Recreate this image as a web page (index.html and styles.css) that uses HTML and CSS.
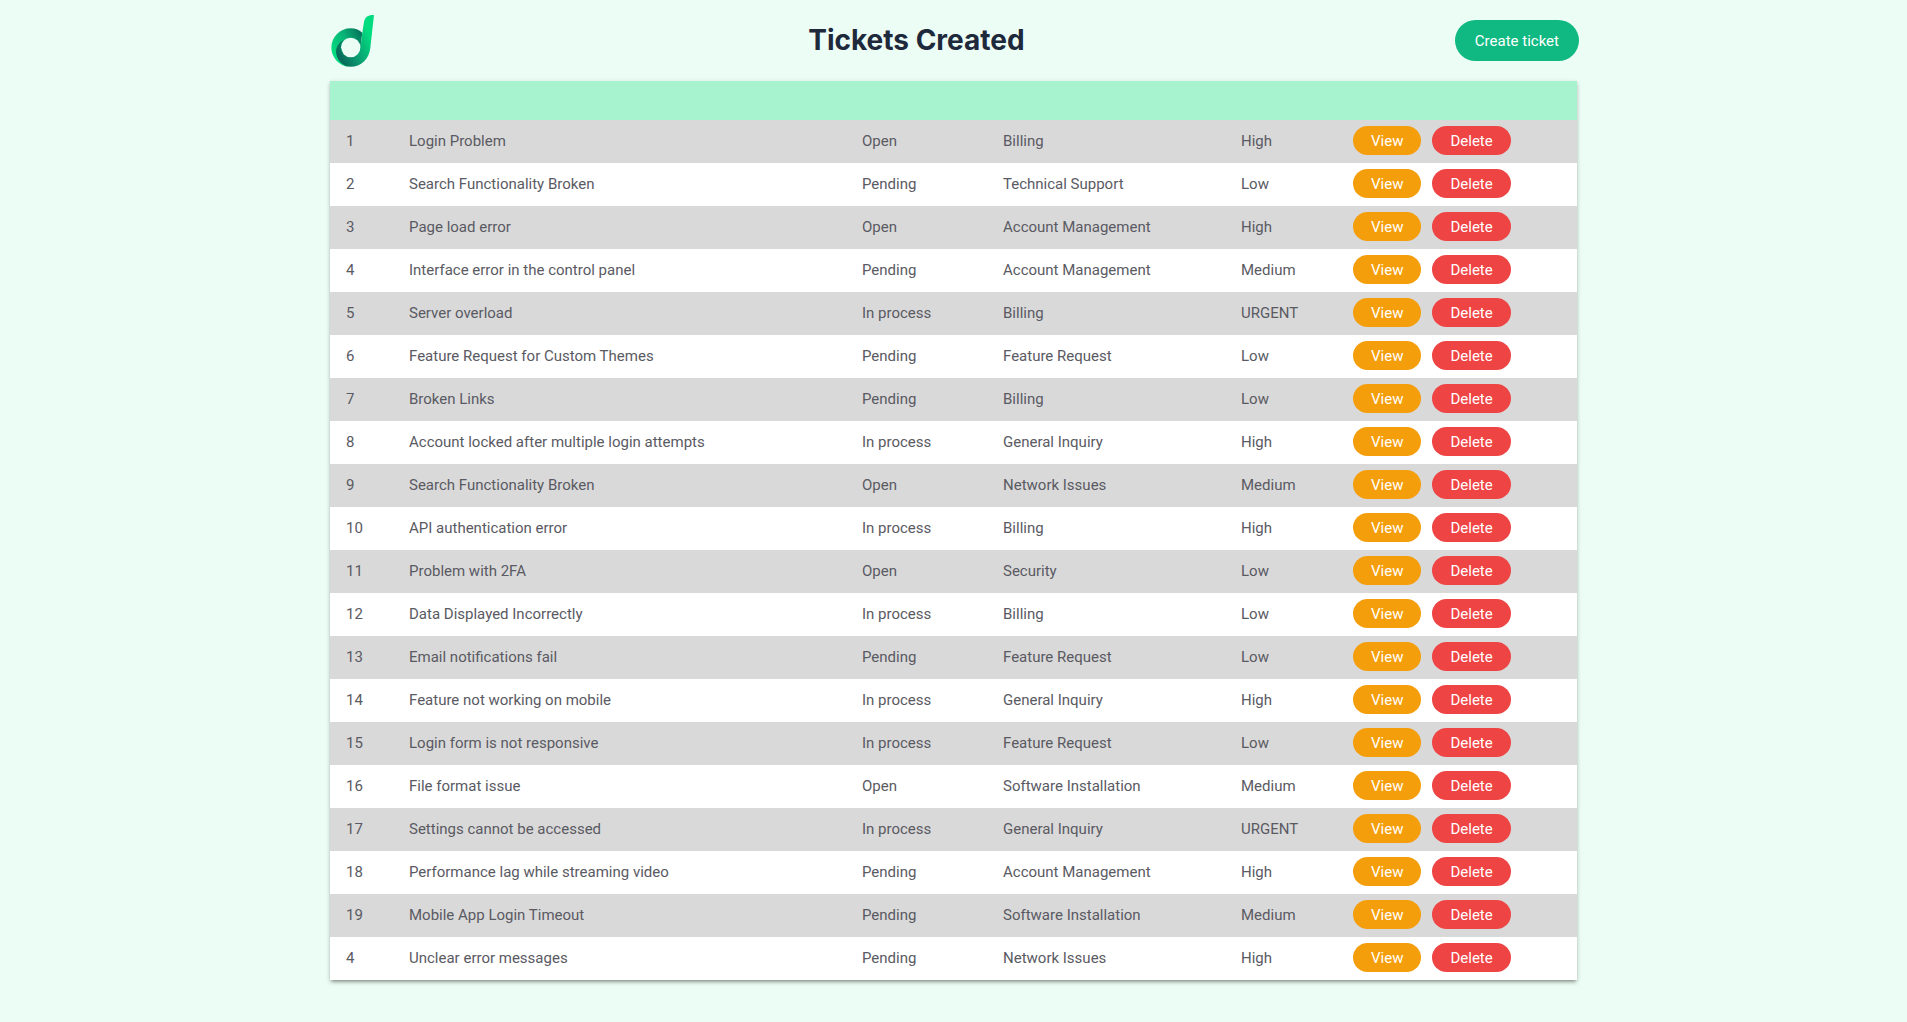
FILE: index.html
```html
<!DOCTYPE html>
<html lang="en">
<head>
<meta charset="utf-8">
<meta name="viewport" content="width=device-width, initial-scale=1">
<title>Tickets Created</title>
<link rel="stylesheet" href="styles.css">
</head>
<body>
<div class="page">
  <header class="header">
    <svg class="logo" viewBox="30 37 144 168" aria-hidden="true">
      <defs>
        <linearGradient id="ring" gradientUnits="userSpaceOnUse" x1="36" y1="150" x2="130" y2="95">
          <stop offset="0" stop-color="#04dc80"/>
          <stop offset="0.5" stop-color="#08b377"/>
          <stop offset="1" stop-color="#066b57"/>
        </linearGradient>
        <linearGradient id="stem" gradientUnits="userSpaceOnUse" x1="50" y1="150" x2="148" y2="100">
          <stop offset="0" stop-color="#066b5a"/>
          <stop offset="0.4" stop-color="#0a9a70"/>
          <stop offset="1" stop-color="#02dc80"/>
        </linearGradient>
      </defs>
      <path fill="url(#ring)" d="M127 96C117 87 105 83 92 83A58 58 0 0 0 34 141C34 168 55 194 84 198L63 141A29 29 0 0 1 92 111A29 29 0 0 1 121 141Z"/>
      <path fill="url(#stem)" d="M162 43C145 42 134 50 132 64L127 96L121 141A29 29 0 0 1 63 141C63 130 67 122 74 117C58 121 45 140 49 160C53 182 70 198 92 198C123 198 148 175 151 141Z"/>
    </svg>
    <h1 class="title">Tickets Created</h1>
    <button class="btn btn-create" type="button">Create ticket</button>
  </header>
  <table class="tickets">
    <colgroup>
      <col class="col-id"><col><col class="col-status"><col class="col-category"><col class="col-priority"><col class="col-actions">
    </colgroup>
    <thead><tr><th></th><th></th><th></th><th></th><th></th><th></th></tr></thead>
    <tbody id="rows"></tbody>
  </table>
</div>
<script src="tickets.js"></script>
</body>
</html>
```
FILE: styles.css
```css
* {
  box-sizing: border-box;
}

body {
  margin: 0;
  background: #ecfdf5;
  color: #5a5a63;
  font: 15px/20px Roboto, sans-serif;
}

.page {
  max-width: 1247px;
  margin: 0 auto;
  padding-bottom: 40px;
}

.header {
  display: flex;
  align-items: center;
  justify-content: space-between;
  height: 81px;
  margin-right: -2px;
}

.logo {
  width: 48px;
  height: 56px;
}

.title {
  margin: 0;
  padding-bottom: 2px;
  color: #1e293b;
  font: 700 28px/36px Inter, sans-serif;
}

.btn {
  border: 0;
  border-radius: 24px;
  color: #fff;
  font: inherit;
  cursor: pointer;
}

.btn-create {
  height: 41px;
  padding: 0 20px;
  background: #10b981;
}

.tickets {
  width: 100%;
  table-layout: fixed;
  border-collapse: collapse;
  background: #fff;
  box-shadow: 0 3px 3px -2px rgba(0, 0, 0, 0.3), 0 3px 4px rgba(0, 0, 0, 0.14), 0 1px 5px rgba(0, 0, 0, 0.12);
}

.col-id { width: 63px; }
.col-status { width: 141px; }
.col-category { width: 238px; }
.col-priority { width: 112px; }
.col-actions { width: 240px; }

.tickets th {
  height: 39px;
  padding: 0;
  background: #a7f3d0;
}

.tickets td {
  height: 43px;
  padding: 6px 16px 8px;
}

.tickets tbody tr:nth-child(odd) {
  background: #d9d9d9;
}

.actions {
  display: flex;
  gap: 11px;
}

.btn-view,
.btn-delete {
  height: 29px;
  padding: 0 18px;
}

.btn-view { background: #f59e0b; }
.btn-delete { background: #ef4444; }
```
FILE: tickets.js
```js
const tickets = [
  [1, "Login Problem", "Open", "Billing", "High"],
  [2, "Search Functionality Broken", "Pending", "Technical Support", "Low"],
  [3, "Page load error", "Open", "Account Management", "High"],
  [4, "Interface error in the control panel", "Pending", "Account Management", "Medium"],
  [5, "Server overload", "In process", "Billing", "URGENT"],
  [6, "Feature Request for Custom Themes", "Pending", "Feature Request", "Low"],
  [7, "Broken Links", "Pending", "Billing", "Low"],
  [8, "Account locked after multiple login attempts", "In process", "General Inquiry", "High"],
  [9, "Search Functionality Broken", "Open", "Network Issues", "Medium"],
  [10, "API authentication error", "In process", "Billing", "High"],
  [11, "Problem with 2FA", "Open", "Security", "Low"],
  [12, "Data Displayed Incorrectly", "In process", "Billing", "Low"],
  [13, "Email notifications fail", "Pending", "Feature Request", "Low"],
  [14, "Feature not working on mobile", "In process", "General Inquiry", "High"],
  [15, "Login form is not responsive", "In process", "Feature Request", "Low"],
  [16, "File format issue", "Open", "Software Installation", "Medium"],
  [17, "Settings cannot be accessed", "In process", "General Inquiry", "URGENT"],
  [18, "Performance lag while streaming video", "Pending", "Account Management", "High"],
  [19, "Mobile App Login Timeout", "Pending", "Software Installation", "Medium"],
  [4, "Unclear error messages", "Pending", "Network Issues", "High"]
];

document.getElementById("rows").innerHTML = tickets.map(ticket => `
  <tr>
    ${ticket.map(value => `<td>${value}</td>`).join("")}
    <td><div class="actions">
      <button class="btn btn-view" type="button">View</button>
      <button class="btn btn-delete" type="button">Delete</button>
    </div></td>
  </tr>`).join("");
```
